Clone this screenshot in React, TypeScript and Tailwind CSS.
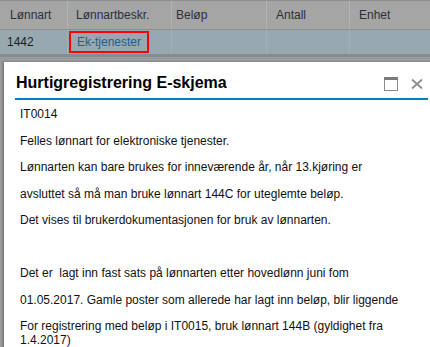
import React from 'react';

const paragraphs = [
  'IT0014',
  'Felles lønnart for elektroniske tjenester.',
  'Lønnarten kan bare brukes for inneværende år, når 13.kjøring er',
  'avsluttet så må man bruke lønnart 144C for uteglemte beløp.',
  'Det vises til brukerdokumentasjonen for bruk av lønnarten.',
  '\u00a0',
  'Det er\u00a0 lagt inn fast sats på lønnarten etter hovedlønn juni fom',
  '01.05.2017. Gamle poster som allerede har lagt inn beløp, blir liggende',
  'For registrering med beløp i IT0015, bruk lønnart 144B (gyldighet fra 1.4.2017)',
];

function MaximizeIcon() {
  return (
    <svg width="14" height="14" viewBox="0 0 14 14">
      <rect x="0.5" y="0.5" width="13" height="13" fill="none" stroke="#8a8a8a" />
      <rect x="0" y="0" width="14" height="3" fill="#7a7a7a" />
    </svg>
  );
}

function CloseIcon() {
  return (
    <svg width="12" height="10" viewBox="0 0 12 10">
      <path d="M1 0.5 L11 9.5 M11 0.5 L1 9.5" stroke="#8c8c8c" strokeWidth="1.8" fill="none" />
    </svg>
  );
}

export default function App() {
  return (
    <div className="relative w-[430px] h-[347px] overflow-hidden bg-[#9b9b9b] font-['Liberation_Sans',Arial,sans-serif] text-[12px]">
      {/* table behind the overlay */}
      <div className="flex h-[30px] border-t border-b border-[#8e8e8e] bg-[#a5a5a5] text-[#2a3038] leading-[14px]">
        <div className="w-[68px] flex items-center pl-[10px] border-r border-[#b3b3b3]">Lønnart</div>
        <div className="w-[104px] flex items-center pl-[8px] border-r border-[#b3b3b3]">Lønnartbeskr.</div>
        <div className="w-[95px] flex items-center pl-[4px] border-r border-[#b3b3b3]">Beløp</div>
        <div className="w-[83px] flex items-center pl-[9px] border-r border-[#b3b3b3]">Antall</div>
        <div className="flex-1 flex items-center pl-[9px]">Enhet</div>
      </div>
      <div className="flex h-[27px] bg-[#97a8b1] text-[#1a1d20] leading-[14px] border-b-[3px] border-[#838d94]">
        <div className="w-[68px] flex items-center pl-[7px] border-r border-[#a2b1b9]">1442</div>
        <div className="w-[104px] flex items-center pl-[1px] border-r border-[#a2b1b9]">
          <span className="border-2 border-[#ff0000] px-[6px] py-[2px] text-[#1e5f8c]">Ek-tjenester</span>
        </div>
        <div className="w-[95px] border-r border-[#a2b1b9]" />
        <div className="w-[83px] border-r border-[#a2b1b9]" />
        <div className="flex-1" />
      </div>

      {/* dialog */}
      <div className="absolute left-[4px] top-[62px] w-[450px] h-[320px] bg-white shadow-[-1px_0_2px_rgba(0,0,0,0.35)]">
        <div className="relative mx-[11px] w-[413px] pt-[12px] pb-[6px] border-b-2 border-[#0b7dbd]">
          <h1 className="pl-[1px] text-[16px] leading-[18px] font-bold text-black">Hurtigregistrering E-skjema</h1>
          <div className="absolute right-[5px] top-[15px] flex items-center gap-[13px]">
            <MaximizeIcon />
            <CloseIcon />
          </div>
        </div>
        <div className="pl-[16px] pt-[7px] w-[416px] text-[#111] leading-[14px]">
          {paragraphs.map((p, i) => (
            <p key={i} className="mb-[12.5px]">
              {p}
            </p>
          ))}
        </div>
      </div>
    </div>
  );
}
